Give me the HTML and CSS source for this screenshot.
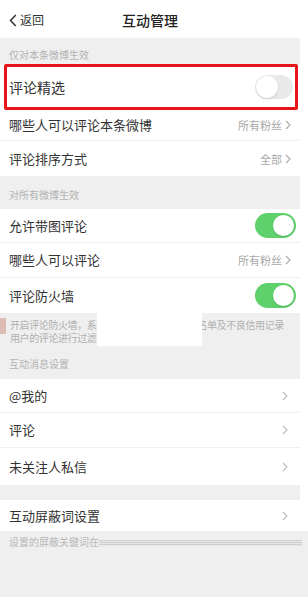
FILE: index.html
```html
<!DOCTYPE html>
<html lang="zh">
<head>
<meta charset="utf-8">
<link rel="stylesheet" href="styles.css">
</head>
<body>
<div class="screen">
  <header class="nav">
    <div class="back">
      <svg width="8" height="13" viewBox="0 0 8 13"><path d="M6.8 1 L1.5 6.5 L6.8 12" fill="none" stroke="#333" stroke-width="1.5"/></svg>
      <span>返回</span>
    </div>
    <div class="title">互动管理</div>
  </header>

  <div class="sec-head h26">仅对本条微博生效</div>
  <div class="row row-big">
    <div class="hl">
      <span class="label big">评论精选</span>
      <span class="toggle off"><span class="knob"></span></span>
    </div>
  </div>
  <div class="row line r31">
    <span class="label">哪些人可以评论本条微博</span>
    <span class="value">所有粉丝<svg class="chev" width="6" height="10" viewBox="0 0 6 10"><path d="M1 1 L5 5 L1 9" fill="none" stroke="#aaa" stroke-width="1.1"/></svg></span>
  </div>
  <div class="row">
    <span class="label">评论排序方式</span>
    <span class="value">全部<svg class="chev" width="6" height="10" viewBox="0 0 6 10"><path d="M1 1 L5 5 L1 9" fill="none" stroke="#aaa" stroke-width="1.1"/></svg></span>
  </div>

  <div class="sec-head h33">对所有微博生效</div>
  <div class="row line r34">
    <span class="label">允许带图评论</span>
    <span class="toggle on"><span class="knob"></span></span>
  </div>
  <div class="row line">
    <span class="label">哪些人可以评论</span>
    <span class="value">所有粉丝<svg class="chev" width="6" height="10" viewBox="0 0 6 10"><path d="M1 1 L5 5 L1 9" fill="none" stroke="#aaa" stroke-width="1.1"/></svg></span>
  </div>
  <div class="row">
    <span class="label">评论防火墙</span>
    <span class="toggle on"><span class="knob"></span></span>
  </div>

  <div class="desc">
    <p>开启评论防火墙，系<span class="hid">统将自动对关键词、黑</span>名单及不良信用记录</p>
    <p>用户的评论进行过滤</p>
    <div class="mask"></div>
    <div class="pink"></div>
  </div>
  <div class="sec-head h34">互动消息设置</div>
  <div class="row line r34">
    <span class="label">@我的</span>
    <svg class="chev" width="6" height="10" viewBox="0 0 6 10"><path d="M1 1 L5 5 L1 9" fill="none" stroke="#bbb" stroke-width="1.1"/></svg>
  </div>
  <div class="row line">
    <span class="label">评论</span>
    <svg class="chev" width="6" height="10" viewBox="0 0 6 10"><path d="M1 1 L5 5 L1 9" fill="none" stroke="#bbb" stroke-width="1.1"/></svg>
  </div>
  <div class="row tall">
    <span class="label">未关注人私信</span>
    <svg class="chev" width="6" height="10" viewBox="0 0 6 10"><path d="M1 1 L5 5 L1 9" fill="none" stroke="#bbb" stroke-width="1.1"/></svg>
  </div>
  <div class="gap"></div>
  <div class="row short">
    <span class="label">互动屏蔽词设置</span>
    <svg class="chev" width="6" height="10" viewBox="0 0 6 10"><path d="M1 1 L5 5 L1 9" fill="none" stroke="#bbb" stroke-width="1.1"/></svg>
  </div>
  <div class="footer">
    <span class="ftext">设置的屏蔽关键词在</span>
    <span class="streak"></span>
  </div>
</div>
</body>
</html>
```
FILE: styles.css
```css
* { box-sizing: border-box; margin: 0; padding: 0; }
html, body { background: #fff; }
body {
  font-family: "Noto Sans CJK SC", "Noto Sans", sans-serif;
  color: #333;
  width: 308px;
  height: 597px;
  overflow: hidden;
}
.screen {
  width: 308px;
  display: flex;
  flex-direction: column;
}
.nav {
  height: 38px;
  width: 300px;
  position: relative;
  display: flex;
  align-items: center;
  justify-content: center;
  background: #fff;
}
.back {
  position: absolute;
  left: 9px;
  top: 13px;
  display: flex;
  align-items: center;
  gap: 3px;
  font-size: 12px;
  color: #333;
  line-height: 14px;
}
.title {
  font-size: 14px;
  font-weight: 500;
  color: #222;
  margin-top: 2px;
}
.sec-head {
  width: 300px;
  background: #efefef;
  font-size: 10px;
  color: #b3b3b3;
  padding-left: 9px;
  display: flex;
  align-items: flex-end;
  line-height: 12px;
}
.h26 { height: 26px; padding-bottom: 3px; }
.h33 { height: 33px; padding-bottom: 8px; }
.h34 { height: 34px; padding-bottom: 9px; }
.row {
  width: 300px;
  height: 35px;
  display: flex;
  align-items: center;
  justify-content: space-between;
  padding: 0 12px 0 9px;
  background: #fff;
}
.row.line { border-bottom: 1px solid #f0f0f0; }
.row.r31 { height: 31px; }
.row.r34 { height: 34px; }
.row.tall { height: 37px; }
.row.short { height: 32px; border-bottom: 1px solid #eee; width: 308px; padding-right: 20px; }
.row-big {
  height: 46px;
  padding: 0 0 0 4px;
  align-items: stretch;
}
.hl {
  flex: 1;
  margin-right: 2px;
  border: 3px solid #e8141c;
  border-radius: 2px;
  display: flex;
  align-items: center;
  justify-content: space-between;
  padding: 0 2px 0 2px;
}
.label { font-size: 13px; color: #333; line-height: 16px; }
.label.big { font-size: 14px; }
.value {
  font-size: 11px;
  color: #a8a8a8;
  display: flex;
  align-items: center;
  gap: 3px;
  margin-right: -3px;
}
.chev { display: block; }
.toggle {
  width: 41px;
  height: 25px;
  border-radius: 13px;
  position: relative;
  display: block;
  margin-right: -8px;
}
.toggle.off { background: #e9e9e9; width: 38px; height: 24px; margin-right: 0; }
.toggle.on { background: #5fd16c; }
.knob {
  position: absolute;
  top: 2px;
  width: 21px;
  height: 21px;
  border-radius: 50%;
  background: #fff;
  box-shadow: 0 1px 2px rgba(0,0,0,0.15);
}
.toggle.off .knob { left: 1px; top: 1px; width: 22px; height: 22px; }
.toggle.on .knob { right: 2px; }
.desc {
  width: 300px;
  height: 32px;
  background: #efefef;
  padding: 5px 0 0 10px;
  position: relative;
  font-size: 10px;
  line-height: 13px;
  color: #b0b0b0;
}
.desc p { letter-spacing: -0.4px; white-space: nowrap; }
.desc .hid { letter-spacing: 0.1px; }
.mask {
  position: absolute;
  left: 97px;
  top: 0;
  width: 105px;
  height: 33px;
  background: #fff;
}
.pink {
  position: absolute;
  left: 0;
  top: 5px;
  width: 6px;
  height: 16px;
  background: #dcbcb4;
}
.gap { width: 300px; height: 15px; background: #efefef; }
.footer {
  height: 70px;
  background: #efefef;
  display: flex;
  align-items: flex-start;
  padding: 4px 0 0 9px;
  font-size: 10px;
  color: #b8b8b8;
  line-height: 12px;
}
.streak {
  display: block;
  width: 203px;
  height: 6px;
  margin-top: 4px;
  background: repeating-linear-gradient(#cfcfcf 0 1px, #e6e6e6 1px 2px);
}
```
